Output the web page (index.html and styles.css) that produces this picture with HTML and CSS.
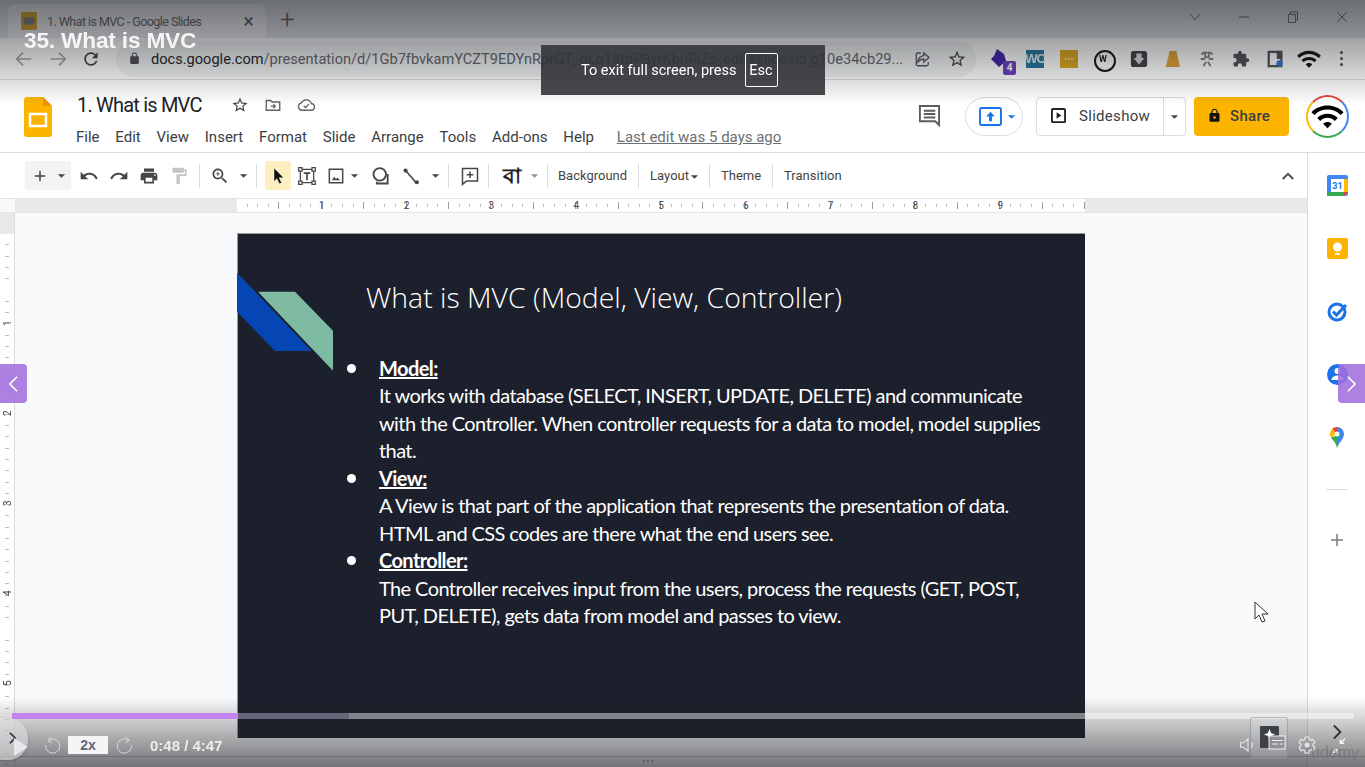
FILE: index.html
```html
<!DOCTYPE html>
<html lang="en">
<head>
    <meta charset="UTF-8">
    <title>35. What is MVC</title>
    <link rel="stylesheet" href="styles.css">
</head>
<body>

<svg class="defs" width="0" height="0">
    <symbol id="wifi" viewBox="0 0 24 24"><path d="M1 9l2 2c4.97-4.97 13.03-4.97 18 0l2-2C16.93 2.93 7.08 2.93 1 9zm8 8l3 3 3-3c-1.65-1.66-4.34-1.66-6 0zm-4-4l2 2c2.76-2.76 7.24-2.76 10 0l2-2C15.14 9.14 8.87 9.14 5 13z"/></symbol>
    <symbol id="caret" viewBox="0 0 10 6"><path d="M1 1h8L5 5z"/></symbol>
    <symbol id="star" viewBox="0 0 24 24"><path d="M22 9.24l-7.19-.62L12 2 9.19 8.63 2 9.24l5.46 4.73L5.82 21 12 17.27 18.18 21l-1.63-7.03L22 9.24zM12 15.4l-3.76 2.27 1-4.28-3.32-2.88 4.38-.38L12 6.1l1.71 4.04 4.38.38-3.32 2.88 1 4.28L12 15.4z"/></symbol>
</svg>

<div class="page">
    <!-- browser -->
    <div class="tabbar">
        <div class="tab">
            <svg class="tab-icon" viewBox="0 0 18 20"><rect width="18" height="20" rx="2" fill="#d9a521"/><rect x="3" y="6" width="12" height="8" fill="#7a7c80"/></svg>
            <span class="tab-title">1. What is MVC - Google Slides</span>
            <span class="tab-close">×</span>
        </div>
        <span class="tab-new">+</span>
        <div class="win-btns">
            <svg class="win-icon" viewBox="0 0 12 12"><path d="M1 3l5 6 5-6" fill="none" stroke="#63666a" stroke-width="1"/></svg>
            <svg class="win-icon" viewBox="0 0 12 12"><path d="M1 6h10" stroke="#63666a" stroke-width="1"/></svg>
            <svg class="win-icon" viewBox="0 0 12 12"><path d="M1.5 3.5h7v8h-7zM3.5 3.5v-2.5h7v8h-2" fill="none" stroke="#63666a" stroke-width="1"/></svg>
            <svg class="win-icon" viewBox="0 0 12 12"><path d="M1 1l10 10M11 1L1 11" stroke="#63666a" stroke-width="1"/></svg>
        </div>
    </div>

    <div class="addressbar">
        <svg class="nav-icon" viewBox="0 0 24 24"><path d="M20 12H5m6-7l-7 7 7 7" fill="none" stroke="#a3a5a8" stroke-width="1.8"/></svg>
        <svg class="nav-icon" viewBox="0 0 24 24"><path d="M4 12h15m-6-7l7 7-7 7" fill="none" stroke="#a3a5a8" stroke-width="1.8"/></svg>
        <svg class="nav-icon reload" viewBox="0 0 24 24"><path d="M17.65 6.35C16.2 4.9 14.21 4 12 4c-4.42 0-7.99 3.58-7.99 8s3.57 8 7.99 8c3.73 0 6.84-2.55 7.73-6h-2.08c-.82 2.33-3.04 4-5.65 4-3.31 0-6-2.69-6-6s2.69-6 6-6c1.66 0 3.14.69 4.22 1.78L13 11h7V4l-2.35 2.35z"/></svg>
        <div class="omnibox">
            <svg class="lock" viewBox="0 0 24 24"><path d="M18 8h-1V6c0-2.76-2.24-5-5-5S7 3.24 7 6v2H6c-1.1 0-2 .9-2 2v10c0 1.1.9 2 2 2h12c1.1 0 2-.9 2-2V10c0-1.1-.9-2-2-2zm-2.900 0H8.900V6c0-1.710 1.390-3.100 3.100-3.100 1.710 0 3.100 1.390 3.100 3.100v2z"/></svg>
            <span class="url"><b>docs.google.com</b>/presentation/d/1Gb7fbvkamYCZT9EDYnRprGT_gLq18tbP8yrKbriRiZs/edit#slide=id.g10e34cb29...</span>
            <svg class="omni-share" viewBox="0 0 24 24"><path d="M13 4l7 6-7 6v-4c-4 0-6 1.500-8 4 .5-4.500 3-8 8-8.500zM9 4H5a2 2 0 0 0-2 2v13a2 2 0 0 0 2 2h12a2 2 0 0 0 2-2v-3" fill="none" stroke="#505358" stroke-width="1.700"/></svg>
            <svg class="omni-star"><use href="#star"/></svg>
        </div>
        <div class="extensions">
            <span class="ext ext-badge">
                <svg class="ext-diamond" viewBox="0 0 20 20"><path d="M8 1l7 5 2 7-7 6-8-8 3-3z" fill="#3f1fa5"/></svg>
                <span class="badge-num">4</span>
            </span>
            <span class="ext ext-wc">WC</span>
            <span class="ext ext-dots">•••</span>
            <span class="ext ext-w">W</span>
            <span class="ext">
                <svg class="ext-svg" viewBox="0 0 20 20"><rect x="1" y="1" width="18" height="18" rx="3" fill="#3c3f42"/><path d="M7 4h6v5h3l-6 7-6-7h3z" fill="#d5d6d8"/></svg>
            </span>
            <span class="ext">
                <svg class="ext-svg" viewBox="0 0 20 20"><path d="M6 1h8l1 6 3 12H2L5 7z" fill="#e0a032"/></svg>
            </span>
            <span class="ext">
                <svg class="ext-svg" viewBox="0 0 20 20"><path d="M4 5l3-3M13 2l3 3M3 10h5M12 10h5M6 18l3-5M11 13l3 5M8 3h4v5H8z" fill="none" stroke="#7e8083" stroke-width="2"/></svg>
            </span>
            <span class="ext">
                <svg class="ext-svg" viewBox="0 0 24 24"><path fill="#4b4d50" d="M20.500 11H19V7c0-1.100-.9-2-2-2h-4V3.500C13 2.120 11.880 1 10.500 1S8 2.120 8 3.500V5H4c-1.100 0-1.990.9-1.990 2v3.800H3.500c1.490 0 2.700 1.210 2.700 2.700s-1.210 2.700-2.700 2.700H2V20c0 1.100.9 2 2 2h3.800v-1.500c0-1.490 1.210-2.700 2.700-2.700 1.490 0 2.700 1.210 2.700 2.700V22H17c1.100 0 2-.9 2-2v-4h1.500c1.380 0 2.500-1.120 2.500-2.500S21.880 11 20.500 11z"/></svg>
            </span>
            <span class="ext">
                <svg class="ext-svg" viewBox="0 0 20 20"><path d="M3 2h14v16H3z" fill="none" stroke="#4b4d50" stroke-width="2.500"/><rect x="12" y="1" width="6" height="9" fill="#4b4d50"/><circle cx="15" cy="15" r="3.500" fill="#2f6fd8"/></svg>
            </span>
            <span class="ext">
                <svg class="ext-wifi"><use href="#wifi"/></svg>
            </span>
            <span class="kebab"><i></i><i></i><i></i></span>
        </div>
    </div>

    <!-- slides header -->
    <header class="doc-header">
        <svg class="slides-logo" viewBox="0 0 28 40"><path d="M3 0h16l9 9v28a3 3 0 0 1-3 3H3a3 3 0 0 1-3-3V3a3 3 0 0 1 3-3z" fill="#fdb400"/><path d="M19 0l9 9h-9z" fill="#f09300"/><rect x="6" y="17" width="16" height="12" fill="none" stroke="#fff" stroke-width="2.500"/></svg>
        <div class="doc-info">
            <div class="doc-title-row">
                <span class="doc-title">1. What is MVC</span>
                <svg class="title-star"><use href="#star"/></svg>
                <svg class="title-icon" viewBox="0 0 24 24"><path d="M3 6h6l2 2h10v11H3zM9 13.500h6m-2.500-2.500l2.500 2.500-2.500 2.500" fill="none" stroke="#5f6368" stroke-width="1.800"/></svg>
                <svg class="title-icon" viewBox="0 0 24 24"><path d="M7 19a5 5 0 0 1-1-9.900A7 7 0 0 1 19 10a4.500 4.500 0 0 1-.5 9zM9 13l2.500 2.500L15.500 11" fill="none" stroke="#5f6368" stroke-width="1.800"/></svg>
            </div>
            <nav class="menu">
                <span>File</span><span>Edit</span><span>View</span><span>Insert</span><span>Format</span><span>Slide</span><span>Arrange</span><span>Tools</span><span>Add-ons</span><span>Help</span>
                <a class="last-edit">Last edit was 5 days ago</a>
            </nav>
        </div>
        <div class="doc-actions">
            <svg class="comment-icon" viewBox="0 0 24 24"><path d="M2 2h20v20l-4-4H2z" fill="none" stroke="#5a5d61" stroke-width="2"/><path d="M6 7h12M6 10.500h12M6 14h12" stroke="#5a5d61" stroke-width="2"/></svg>
            <div class="meet-btn">
                <svg class="meet-icon" viewBox="0 0 24 20"><rect x="1" y="1" width="22" height="18" rx="1.500" fill="none" stroke="#1a73e8" stroke-width="2"/><path d="M12 5l4.500 5H13.500v5h-3v-5H7.500z" fill="#1a73e8"/></svg>
                <svg class="caret-blue"><use href="#caret"/></svg>
            </div>
            <div class="slideshow-btn">
                <span class="slideshow-main">
                    <svg class="play-box" viewBox="0 0 16 16"><rect x="1" y="1" width="14" height="14" rx="1" fill="none" stroke="#202124" stroke-width="2"/><path d="M6 4.500l5 3.500-5 3.500z" fill="#202124"/></svg>
                    Slideshow
                </span>
                <span class="slideshow-drop"><svg class="caret"><use href="#caret"/></svg></span>
            </div>
            <div class="share-btn">
                <svg class="share-lock" viewBox="0 0 24 24"><path d="M18 8h-1V6c0-2.760-2.240-5-5-5S7 3.240 7 6v2H6c-1.100 0-2 .9-2 2v10c0 1.100.9 2 2 2h12c1.100 0 2-.9 2-2V10c0-1.100-.9-2-2-2zm-6 9c-1.100 0-2-.9-2-2s.9-2 2-2 2 .9 2 2-.9 2-2 2zm3.100-9H8.900V6c0-1.710 1.390-3.100 3.100-3.100 1.710 0 3.100 1.390 3.100 3.100v2z"/></svg>
                Share
            </div>
            <div class="avatar"><svg class="avatar-wifi"><use href="#wifi"/></svg></div>
        </div>
    </header>

    <div class="doc-body">
        <div class="editor">
            <div class="toolbar">
                <span class="tool add-group">
                    <svg class="ic-18" viewBox="0 0 24 24"><path d="M19 13h-6v6h-2v-6H5v-2h6V5h2v6h6z"/></svg>
                    <svg class="caret"><use href="#caret"/></svg>
                </span>
                <span class="tool w30"><svg class="ic-20" viewBox="0 0 24 24"><path d="M12.500 8c-2.650 0-5.050.99-6.900 2.600L2 7v9h9l-3.620-3.620c1.390-1.160 3.160-1.880 5.120-1.880 3.540 0 6.550 2.310 7.600 5.500l2.370-.78C21.080 11.030 17.150 8 12.500 8z"/></svg></span>
                <span class="tool w30"><svg class="ic-20" viewBox="0 0 24 24"><path d="M18.400 10.600C16.550 8.990 14.150 8 11.500 8c-4.650 0-8.580 3.030-9.960 7.220L3.900 16c1.050-3.190 4.050-5.500 7.600-5.500 1.950 0 3.730.72 5.120 1.880L13 16h9V7l-3.600 3.600z"/></svg></span>
                <span class="tool w30"><svg class="ic-20" viewBox="0 0 24 24"><path d="M19 8H5c-1.660 0-3 1.340-3 3v6h4v4h12v-4h4v-6c0-1.660-1.340-3-3-3zm-3 11H8v-5h8v5zm3-7c-.55 0-1-.45-1-1s.45-1 1-1 1 .45 1 1-.45 1-1 1zm-1-9H6v4h12V3z"/></svg></span>
                <span class="tool w30 muted"><svg class="ic-20" viewBox="0 0 24 24"><path d="M18 4V3c0-.55-.45-1-1-1H5c-.55 0-1 .45-1 1v4c0 .55.45 1 1 1h12c.55 0 1-.45 1-1V6h1v4H9v11c0 .55.45 1 1 1h2c.55 0 1-.45 1-1v-9h8V4h-3z"/></svg></span>
                <i class="tool-sep"></i>
                <span class="tool w30"><svg class="ic-20" viewBox="0 0 24 24"><path d="M15.500 14h-.79l-.28-.27C15.410 12.590 16 11.110 16 9.500 16 5.910 13.090 3 9.500 3S3 5.910 3 9.500 5.910 16 9.500 16c1.610 0 3.090-.59 4.230-1.570l.27.28v.79l5 4.990L20.490 19l-4.990-5zm-6 0C7.010 14 5 11.990 5 9.500S7.010 5 9.500 5 14 7.010 14 9.500 11.990 14 9.500 14zM12 10h-2v2H9v-2H7V9h2V7h1v2h2z"/></svg></span>
                <span class="tool w16"><svg class="caret"><use href="#caret"/></svg></span>
                <i class="tool-sep"></i>
                <span class="tool cursor-tool"><svg class="ic-18 dark" viewBox="0 0 24 24"><path d="M7 2l12 12h-6l3.500 7-2.500 1-3.500-7L7 19z"/></svg></span>
                <span class="tool w30 text-tool"><svg class="ic-20" viewBox="0 0 24 24"><path d="M4 4h16v16H4z" fill="none" stroke="#444746" stroke-width="1.500"/><path d="M2 2h4v4H2zM18 2h4v4h-4zM2 18h4v4H2zM18 18h4v4h-4z" fill="#fff" stroke="#444746" stroke-width="1.500"/><path d="M8 7.500h8v2h-3V17h-2V9.500H8z"/></svg></span>
                <span class="tool w26 image-tool"><svg class="ic-20" viewBox="0 0 24 24"><path d="M4 4h16v16H4z" fill="none" stroke="#444746" stroke-width="1.800"/><path d="M7 17l3-4 2 2.500 2-1.500 3 3z"/></svg></span>
                <span class="tool w12 image-caret"><svg class="caret"><use href="#caret"/></svg></span>
                <span class="tool w30 shape-tool"><svg class="ic-20" viewBox="0 0 24 24"><circle cx="10.500" cy="10" r="7.500" fill="none" stroke="#444746" stroke-width="2.200"/><path d="M20 9.500V21H7v-2" fill="none" stroke="#444746" stroke-width="2.200"/></svg></span>
                <span class="tool w32 line-tool"><svg class="ic-20" viewBox="0 0 24 24"><path d="M6 6l13 15" stroke="#444746" stroke-width="2"/><rect x="3" y="3" width="5" height="5" rx="2.500"/><rect x="16.500" y="17" width="5" height="5" rx="2.500"/></svg></span>
                <span class="tool w16"><svg class="caret"><use href="#caret"/></svg></span>
                <i class="tool-sep"></i>
                <span class="tool w26 comment-tool"><svg class="ic-20" viewBox="0 0 24 24"><path d="M3 3h18v15H8l-5 4z" fill="none" stroke="#444746" stroke-width="1.800"/><path d="M12 6.500v8M8 10.500h8" stroke="#444746" stroke-width="1.800"/></svg></span>
                <i class="tool-sep"></i>
                <span class="tool bangla">বা</span>
                <span class="tool w16 pale"><svg class="caret"><use href="#caret"/></svg></span>
                <i class="tool-sep"></i>
                <span class="tool-text bg-text">Background</span>
                <i class="tool-sep"></i>
                <span class="tool-text layout-text">Layout<svg class="caret tight"><use href="#caret"/></svg></span>
                <i class="tool-sep"></i>
                <span class="tool-text">Theme</span>
                <i class="tool-sep"></i>
                <span class="tool-text">Transition</span>
                <svg class="collapse" viewBox="0 0 24 24"><path d="M5 16l7-7 7 7" fill="none" stroke="#4b4d50" stroke-width="2.500"/></svg>
            </div>

            <div class="h-ruler">
                <div class="ruler-side"></div>
                <div class="h-scale">
                    <span>1</span><span>2</span><span>3</span><span>4</span><span>5</span><span>6</span><span>7</span><span>8</span><span>9</span>
                </div>
                <div class="ruler-side grow"></div>
            </div>

            <div class="workspace">
                <div class="v-ruler">
                    <div class="v-top"></div>
                    <div class="v-scale">
                        <span>1</span><span>2</span><span>3</span><span>4</span><span>5</span>
                    </div>
                </div>
                <div class="canvas">
                    <section class="slide">
                        <svg class="slide-deco" viewBox="0 0 96 137">
                            <path d="M0 38.700L74.700 117H38L0 77.700z" fill="#0546b4"/>
                            <path d="M21 57.700h37L96 96.700v40z" fill="#7fbaa3"/>
                        </svg>
                        <h1 class="slide-title">What is MVC (Model, View, Controller)</h1>
                        <ul class="slide-list">
                            <li><u class="term">Model:</u><br>It works with database (SELECT, INSERT, UPDATE, DELETE) and communicate<br>with the Controller. When controller requests for a data to model, model supplies<br>that.</li>
                            <li><u class="term">View:</u><br>A View is that part of the application that represents the presentation of data.<br>HTML and CSS codes are there what the end users see.</li>
                            <li><u class="term">Controller:</u><br>The Controller receives input from the users, process the requests (GET, POST,<br>PUT, DELETE), gets data from model and passes to view.</li>
                        </ul>
                    </section>
                </div>
            </div>
        </div>

        <aside class="side-panel">
            <span class="side-slot">
                <svg class="side-icon" viewBox="0 0 21 21"><rect width="21" height="21" rx="2" fill="#4285f4"/><rect x="4" y="4" width="13" height="13" fill="#fff"/><rect x="17" y="4" width="4" height="13" fill="#fbbc04"/><rect y="17" width="17" height="4" fill="#34a853"/><path d="M17 21v-4h4z" fill="#ea4335"/><text x="10.500" y="14" class="cal-num">31</text></svg>
            </span>
            <span class="side-slot">
                <svg class="side-icon" viewBox="0 0 21 21"><rect width="21" height="21" rx="2" fill="#fdb400"/><circle cx="10.500" cy="9" r="4.500" fill="#fff"/><rect x="8" y="15" width="5" height="1.800" fill="#fff"/></svg>
            </span>
            <span class="side-slot">
                <svg class="side-icon" viewBox="0 0 21 21"><circle cx="10" cy="11" r="8" fill="none" stroke="#1a73e8" stroke-width="3"/><path d="M6 10.500l3.500 3.500L19 4" fill="none" stroke="#1a73e8" stroke-width="3"/></svg>
            </span>
            <span class="side-slot">
                <svg class="side-icon" viewBox="0 0 21 21"><circle cx="10.500" cy="10.500" r="10.500" fill="#1a73e8"/><circle cx="10.500" cy="7" r="3" fill="#fff"/><path d="M4.500 16c0-3 3-4.500 6-4.500s6 1.500 6 4.500z" fill="#fff"/></svg>
            </span>
            <span class="side-slot">
                <svg class="side-map" viewBox="0 0 14 21"><path d="M7 0a7 7 0 0 1 7 7c0 5-5 8-7 14z" fill="#4285f4"/><path d="M7 0a7 7 0 0 0-5 2l5 5z" fill="#ea4335"/><path d="M2 2a7 7 0 0 0-2 5c0 1.500.5 2.500 1 3.500L7 7z" fill="#fbbc04"/><path d="M1 10.500c2 3 5 5 6 10.500V12l5-5z" fill="#34a853"/><circle cx="7" cy="7" r="2.500" fill="#fff"/></svg>
            </span>
            <i class="side-sep"></i>
            <svg class="side-plus" viewBox="0 0 14 14"><path d="M7 1v12M1 7h12" stroke="#777a7e" stroke-width="1.500"/></svg>
        </aside>
    </div>

    <!-- video player overlays -->
    <div class="shade-top"></div>
    <div class="shade-bottom"></div>
    <div class="video-title">35. What is MVC</div>
    <div class="fs-toast">To exit full screen, press<span class="esc-key">Esc</span></div>

    <div class="side-nav prev"><svg class="nav-arrow" viewBox="0 0 12 20"><path d="M10 2L2 10l8 8" fill="none" stroke="#fff" stroke-width="1.800"/></svg></div>
    <div class="side-nav next"><svg class="nav-arrow" viewBox="0 0 12 20"><path d="M2 2l8 8-8 8" fill="none" stroke="#fff" stroke-width="1.800"/></svg></div>

    <svg class="mouse" viewBox="0 0 15 23"><path d="M1 1v17l4-4 3 7 3-1-3-7h6z" fill="#fff" stroke="#333" stroke-width="1"/></svg>

    <div class="left-bump"><svg class="bump-arrow" viewBox="0 0 10 16"><path d="M2 2l6 6-6 6" fill="none" stroke="#2c2e33" stroke-width="2"/></svg></div>

    <div class="player">
        <div class="progress">
            <div class="played"></div>
            <div class="buffered"></div>
        </div>
        <div class="controls">
            <svg class="play" viewBox="0 0 14 18"><path d="M0 0l14 9L0 18z" fill="#e6e7ec"/></svg>
            <svg class="seek" viewBox="0 0 24 24"><path d="M7 6a9.500 9.500 0 1 1-3.500 6M11 1L6.500 6l5 3" fill="none" stroke="#d9dadd" stroke-width="1.300"/></svg>
            <span class="speed">2x</span>
            <svg class="seek" viewBox="0 0 24 24"><path d="M17 6a9.500 9.500 0 1 0 3.500 6M13 1l4.500 5-5 3" fill="none" stroke="#d9dadd" stroke-width="1.300"/></svg>
            <span class="time">0:48 / 4:47</span>
            <div class="controls-right">
                <svg class="volume" viewBox="0 0 24 24"><path d="M2 9h4l6-5v16l-6-5H2zM16 8a6 6 0 0 1 0 8" fill="none" stroke="#e2e3e6" stroke-width="1.500"/></svg>
                <span class="transcript-box">
                    <svg class="transcript" viewBox="0 0 28 26"><rect x="2" y="1" width="19" height="22" rx="1" fill="#3d4045"/><path d="M11.500 4l1.500 4 4 1.500-4 1.500-1.500 4-1.500-4-4-1.500 4-1.500z" fill="#fff"/><rect x="11" y="11" width="16" height="13" fill="#8f9196" stroke="#eee" stroke-width="1"/><path d="M14 19h6M22 19h3M14 15.500h11" stroke="#eee" stroke-width="1"/></svg>
                </span>
                <svg class="gear" viewBox="0 0 24 24"><path fill="none" stroke="#e2e3e6" stroke-width="1.500" d="M19.140 12.940c.04-.3.06-.61.06-.94 0-.32-.02-.64-.07-.94l2.030-1.580c.18-.14.23-.41.12-.61l-1.920-3.320c-.12-.22-.37-.29-.59-.22l-2.390.96c-.5-.38-1.030-.7-1.620-.94l-.36-2.540c-.04-.24-.24-.41-.48-.41h-3.840c-.24 0-.43.17-.47.41l-.36 2.540c-.59.24-1.130.57-1.620.94l-2.390-.96c-.22-.08-.47 0-.59.22L2.740 8.870c-.12.21-.08.47.12.61l2.030 1.580c-.05.3-.09.63-.09.94s.02.64.07.94l-2.030 1.580c-.18.14-.23.41-.12.61l1.920 3.320c.12.22.37.29.59.22l2.390-.96c.5.38 1.030.7 1.620.94l.36 2.540c.05.24.24.41.48.41h3.840c.24 0 .44-.17.47-.41l.36-2.540c.59-.24 1.130-.56 1.620-.94l2.390.96c.22.08.47 0 .59-.22l1.920-3.320c.12-.22.07-.47-.12-.61l-2.010-1.580z"/><circle cx="12" cy="12" r="3" fill="#e2e3e6"/></svg>
                <svg class="fullscreen" viewBox="0 0 16 34"><path d="M3 2l7 7-7 7" fill="none" stroke="#2c2e33" stroke-width="2"/><path d="M15 16l-5 5m0-4v4h4M1 33l5-5m0 4v-4H2" fill="none" stroke="#f4f4f6" stroke-width="1.500"/></svg>
            </div>
        </div>
        <span class="grip">•••</span>
    </div>
    <div class="udemy-mark">udemy</div>
</div>

</body>
</html>
```

FILE: styles.css
```css
* {
    box-sizing: border-box;
}

html, body {
    margin: 0;
    padding: 0;
    height: 100%;
    overflow: hidden;
}

body {
    font-family: 'Roboto', sans-serif;
    background-color: #fff;
    color: #3c4043;
}

.defs {
    position: absolute;
}

.page {
    position: relative;
    width: 1365px;
    height: 767px;
    overflow: hidden;
    display: flex;
    flex-direction: column;
    filter: blur(0.35px);
}

/* browser tabs */
.tabbar {
    height: 38px;
    background-color: #dee1e6;
    display: flex;
    align-items: flex-end;
    padding-left: 8px;
    flex-shrink: 0;
}

.tab {
    width: 258px;
    height: 34px;
    background-color: #f2f3f5;
    border-radius: 8px 8px 0 0;
    display: flex;
    align-items: center;
    padding: 0 12px 0 13px;
}

.tab-icon {
    width: 16px;
    height: 18px;
    flex-shrink: 0;
}

.tab-title {
    margin-left: 10px;
    font-size: 12.5px;
    letter-spacing: -0.55px;
    color: #5c5f63;
    white-space: nowrap;
}

.tab-close {
    margin-left: auto;
    font-size: 20px;
    color: #55585c;
}

.tab-new {
    margin-left: 14px;
    align-self: center;
    font-size: 26px;
    font-weight: 300;
    color: #55585c;
    line-height: 1;
}

.win-btns {
    margin-left: auto;
    width: 159px;
    margin-right: 17px;
    align-self: flex-start;
    margin-top: 11px;
    display: flex;
    justify-content: space-between;
}

.win-icon {
    width: 12px;
    height: 12px;
}

/* address bar */
.addressbar {
    height: 42px;
    background-color: #fff;
    border-bottom: 1px solid #dadce0;
    display: flex;
    align-items: center;
    padding-left: 13px;
    flex-shrink: 0;
}

.nav-icon {
    width: 22px;
    height: 22px;
    margin-right: 12px;
    flex-shrink: 0;
}

.reload {
    width: 20px;
    height: 20px;
    margin-right: 15px;
    fill: #404245;
}

.omnibox {
    width: 860px;
    height: 36px;
    background-color: #f1f3f4;
    border-radius: 18px;
    display: flex;
    align-items: center;
    padding-left: 12px;
    flex-shrink: 0;
}

.lock {
    width: 13px;
    height: 13px;
    fill: #4b4d50;
    flex-shrink: 0;
}

.url {
    margin-left: 10px;
    font-size: 14.6px;
    color: #5f6368;
    white-space: nowrap;
    width: 752px;
    overflow: hidden;
    flex-shrink: 0;
}

.url b {
    font-weight: 400;
    color: #202124;
}

.omni-share {
    width: 18px;
    height: 18px;
    margin-left: 11px;
    flex-shrink: 0;
}

.omni-star {
    width: 20px;
    height: 20px;
    margin-left: 15px;
    fill: #444;
    flex-shrink: 0;
}

.extensions {
    display: flex;
    align-items: center;
    margin-left: 8px;
}

.ext {
    position: relative;
    width: 34px;
    height: 24px;
    display: flex;
    align-items: center;
    justify-content: center;
    flex-shrink: 0;
}

.ext-svg {
    width: 18px;
    height: 18px;
}

.ext-diamond {
    width: 20px;
    height: 20px;
    margin-left: -4px;
    margin-top: -2px;
}

.ext-wifi {
    width: 26px;
    height: 26px;
    fill: #111;
}

.badge-num {
    position: absolute;
    right: 2px;
    bottom: -4px;
    width: 13px;
    height: 14px;
    background-color: #6a3cc0;
    color: #fff;
    font-size: 10px;
    font-weight: 700;
    text-align: center;
    line-height: 14px;
    border-radius: 2px;
}

.ext-wc {
    font-size: 13px;
    font-weight: 700;
    color: #d9eef5;
    font-family: 'Liberation Sans', sans-serif;
    letter-spacing: -1px;
    background-color: #21759b;
    background-clip: content-box;
    padding: 3px 8px;
}

.ext-dots {
    background-color: #dca51c;
    background-clip: content-box;
    padding: 3px 8px;
    color: #f6e6b4;
    font-size: 9px;
}

.ext-w {
    margin-right: 2px;
    font-size: 9px;
    font-weight: 700;
    color: #111;
}

.ext-w::after {
    content: "";
    position: absolute;
    left: 8px;
    top: 3px;
    width: 18px;
    height: 18px;
    border: 2px solid #111;
    border-radius: 50%;
}

.kebab {
    margin-left: 14px;
    display: flex;
    flex-direction: column;
    gap: 3px;
}

.kebab i {
    width: 3px;
    height: 3px;
    border-radius: 50%;
    background-color: #4b4d50;
}

/* slides header */
.doc-header {
    height: 73px;
    background-color: #fff;
    border-bottom: 1px solid #dadce0;
    display: flex;
    padding: 17px 16px 0 24px;
    flex-shrink: 0;
}

.slides-logo {
    width: 28px;
    height: 40px;
    flex-shrink: 0;
}

.doc-info {
    margin-left: 25px;
    margin-top: -3px;
}

.doc-title-row {
    display: flex;
    align-items: center;
    height: 22px;
}

.doc-title {
    font-size: 20px;
    color: #202124;
    letter-spacing: -0.8px;
    white-space: nowrap;
    width: 154px;
}

.title-star {
    width: 18px;
    height: 18px;
    fill: #444;
}

.title-icon {
    width: 18px;
    height: 18px;
    margin-left: 15px;
}

.menu {
    display: flex;
    gap: 15.8px;
    margin-top: 12px;
    margin-left: -1px;
    font-size: 15px;
    color: #3c4043;
    white-space: nowrap;
}

.last-edit {
    margin-left: 7px;
    color: #6b6e73;
    text-decoration: underline;
}

.doc-actions {
    margin-left: auto;
    display: flex;
    align-items: flex-start;
}

.comment-icon {
    width: 23px;
    height: 23px;
    margin-top: 7px;
}

.meet-btn {
    width: 58px;
    height: 39px;
    margin-left: 24px;
    border: 1px solid #dadce0;
    border-radius: 20px;
    display: flex;
    align-items: center;
    padding-left: 13px;
    gap: 5px;
}

.meet-icon {
    width: 23px;
    height: 19px;
}

.caret-blue {
    width: 9px;
    height: 6px;
    fill: #1a73e8;
}

.slideshow-btn {
    width: 150px;
    height: 39px;
    margin-left: 13px;
    border: 1px solid #dadce0;
    border-radius: 4px;
    display: flex;
    align-items: center;
}

.slideshow-main {
    width: 127px;
    height: 100%;
    display: flex;
    align-items: center;
    padding-left: 14px;
    padding-bottom: 2px;
    gap: 13px;
    font-size: 15px;
    letter-spacing: 0.3px;
    color: #3c4043;
    border-right: 1px solid #dadce0;
}

.play-box {
    width: 15px;
    height: 15px;
}

.slideshow-drop {
    flex: 1;
    display: flex;
    justify-content: center;
}

.caret {
    width: 9px;
    height: 6px;
    fill: #444;
}

.caret.tight {
    margin-left: 1px;
}

.share-btn {
    width: 95px;
    height: 39px;
    margin-left: 8px;
    background-color: #fdb400;
    border-radius: 4px;
    display: flex;
    align-items: center;
    padding-left: 13px;
    padding-bottom: 2px;
    gap: 8px;
    font-size: 15px;
    font-weight: 500;
    letter-spacing: 0.3px;
    color: #3c4043;
}

.share-lock {
    width: 15px;
    height: 15px;
    fill: #111;
}

.avatar {
    width: 43px;
    height: 43px;
    margin-left: 17px;
    margin-top: -2px;
    border-radius: 50%;
    border: 2px solid;
    border-color: #ea4335 #4285f4 #34a853 #fbbc04;
    display: flex;
    align-items: center;
    justify-content: center;
}

.avatar-wifi {
    width: 35px;
    height: 35px;
    fill: #000;
}

/* body below header */
.doc-body {
    flex: 1;
    display: flex;
    min-height: 0;
}

.editor {
    width: 1308px;
    display: flex;
    flex-direction: column;
    border-right: 1px solid #dadce0;
    flex-shrink: 0;
}

.toolbar {
    height: 45px;
    display: flex;
    align-items: center;
    padding-left: 25px;
    flex-shrink: 0;
    background-color: #fff;
}

.tool {
    height: 29px;
    display: flex;
    align-items: center;
    justify-content: center;
    flex-shrink: 0;
}

.ic-18 {
    width: 18px;
    height: 18px;
    fill: #444746;
}

.ic-20 {
    width: 20px;
    height: 20px;
    fill: #444746;
}

.dark {
    fill: #111;
}

.muted svg {
    fill: #c4c5c7;
}

.pale .caret {
    fill: #909296;
}

.add-group {
    width: 46px;
    background-color: #f1f3f4;
    border-radius: 4px;
    gap: 8px;
    margin-right: 3px;
}

.w12 { width: 12px; }
.w16 { width: 16px; }
.w26 { width: 26px; }
.w30 { width: 30px; }
.w32 { width: 32px; }

.tool-sep {
    width: 1px;
    height: 24px;
    background-color: #dadce0;
    margin: 0 5px;
    flex-shrink: 0;
}

.cursor-tool {
    width: 26px;
    margin-left: 3px;
    background-color: #feefc3;
    border-radius: 3px;
}

.text-tool { margin-left: 1px; }
.image-tool { margin-left: 1px; }
.image-caret { margin-left: -1px; }
.shape-tool { margin-left: 6px; }
.line-tool { margin-left: -1px; }
.comment-tool { margin-left: 3px; }

.bangla {
    width: 32px;
    margin-left: 2px;
    margin-right: -2px;
    padding-top: 4px;
    font-family: 'Noto Sans', 'DejaVu Sans', sans-serif;
    font-size: 21px;
    font-weight: 700;
    color: #202124;
}

.tool-text {
    font-size: 13px;
    color: #444;
    padding: 0 6px;
    white-space: nowrap;
}

.bg-text {
    margin-left: -1px;
}

.layout-text {
    margin-right: -1px;
}

.collapse {
    width: 18px;
    height: 18px;
    margin-left: auto;
    margin-right: 10px;
}

/* rulers */
.h-ruler {
    height: 15px;
    display: flex;
    flex-shrink: 0;
    border-top: 1px solid #e4e5e7;
    border-bottom: 1px solid #e4e5e7;
}

.ruler-side {
    width: 237px;
    background: linear-gradient(90deg, #f8f9fa 15px, #e8e9eb 15px);
    flex-shrink: 0;
}

.ruler-side.grow {
    flex: 1;
    background: #e8e9eb;
}

.h-scale {
    width: 848px;
    display: flex;
    background-color: #fff;
    background-image:
        repeating-linear-gradient(90deg, transparent 0, transparent 41.4px, #9a9c9f 41.4px, #9a9c9f 42.4px),
        repeating-linear-gradient(90deg, transparent 0, transparent 9.6px, #bdbec1 9.6px, #bdbec1 10.6px);
    background-size: 100% 7px, 100% 3px;
    background-position: 0 3px, 0 5px;
    background-repeat: no-repeat;
}

.h-scale span {
    width: 84.8px;
    text-align: center;
    font-size: 10px;
    line-height: 13px;
    color: #444;
    padding-left: 82px;
    white-space: nowrap;
}

.workspace {
    flex: 1;
    display: flex;
    min-height: 0;
}

.v-ruler {
    width: 15px;
    border-right: 1px solid #dadce0;
    flex-shrink: 0;
    background-color: #fff;
}

.v-top {
    height: 21px;
    background-color: #e8e9eb;
}

.v-scale {
    height: 600px;
    display: flex;
    flex-direction: column;
    padding-top: 2px;
    background-image:
        repeating-linear-gradient(180deg, transparent 0, transparent 10.3px, #bdbec1 10.3px, #bdbec1 11.3px);
    background-size: 4px 100%;
    background-position: 5px 0;
    background-repeat: no-repeat;
}

.v-scale span {
    height: 90px;
    flex-shrink: 0;
    font-size: 10px;
    color: #444;
    writing-mode: vertical-rl;
    transform: rotate(180deg);
    text-align: left;
    line-height: 15px;
}

.canvas {
    flex: 1;
    background-color: #f8f9fa;
    padding: 20px 0 0 222px;
    overflow: hidden;
}

/* the slide */
.slide {
    position: relative;
    width: 848px;
    height: 505px;
    background-color: #1c202c;
    color: #fff;
    border: 1px solid #9a9ca0;
    border-width: 1px 0 0 1px;
}

.slide-deco {
    position: absolute;
    left: -1px;
    top: 0;
    width: 96px;
    height: 137px;
}

.slide-title {
    margin: 0;
    padding: 44px 0 0 128px;
    font-family: 'Open Sans', sans-serif;
    font-weight: 300;
    font-size: 28.4px;
    line-height: 38px;
    white-space: nowrap;
}

.slide-list {
    margin: 38.5px 0 0;
    padding-left: 141px;
    list-style: none;
    font-family: 'Lato', sans-serif;
    font-size: 20px;
    line-height: 27.5px;
    letter-spacing: -0.59px;
    white-space: nowrap;
}

.slide-list li {
    position: relative;
}

.slide-list li::before {
    content: "";
    position: absolute;
    left: -32px;
    top: 9px;
    width: 9px;
    height: 9px;
    border-radius: 50%;
    background-color: #fff;
}

.term {
    font-weight: 700;
}

/* side panel */
.side-panel {
    flex: 1;
    display: flex;
    flex-direction: column;
    align-items: center;
    background-color: #fff;
    padding-top: 0.5px;
    padding-left: 1px;
}

.side-slot {
    height: 63px;
    display: flex;
    align-items: center;
}

.side-icon {
    width: 21px;
    height: 21px;
}

.side-map {
    width: 14px;
    height: 21px;
}

.cal-num {
    font-family: 'Roboto', sans-serif;
    font-size: 9px;
    font-weight: 700;
    fill: #1a73e8;
    text-anchor: middle;
}

.side-sep {
    width: 22px;
    height: 1px;
    background-color: #dadce0;
    margin-top: 20px;
}

.side-plus {
    width: 14px;
    height: 14px;
    margin-top: 43px;
}

/* player overlays */
.shade-top {
    position: absolute;
    left: 0;
    top: 0;
    width: 100%;
    height: 105px;
    background: linear-gradient(180deg, rgba(30, 32, 36, 0.6) 0, rgba(30, 32, 36, 0.42) 38px, rgba(30, 32, 36, 0) 100%);
}

.shade-bottom {
    position: absolute;
    left: 0;
    bottom: 0;
    width: 100%;
    height: 70px;
    background:
        linear-gradient(180deg, transparent 59px, rgba(70, 72, 76, 0.35) 59px, rgba(70, 72, 76, 0.35) 60px, transparent 60px),
        linear-gradient(180deg, rgba(30, 32, 36, 0) 0, rgba(30, 32, 36, 0.62) 100%);
}

.video-title {
    position: absolute;
    left: 24px;
    top: 27px;
    font-family: 'Liberation Sans', sans-serif;
    font-size: 22.7px;
    font-weight: 700;
    line-height: 26px;
    color: #f4f5f6;
    letter-spacing: -0.2px;
}

.fs-toast {
    position: absolute;
    left: 541px;
    top: 45px;
    width: 284px;
    height: 50px;
    background-color: rgba(50, 52, 56, 0.9);
    color: #fff;
    font-size: 14.5px;
    display: flex;
    align-items: center;
    gap: 8px;
    padding-left: 40px;
    white-space: pre;
}

.esc-key {
    border: 1px solid #fff;
    border-radius: 2px;
    width: 33px;
    height: 34px;
    display: flex;
    align-items: center;
    justify-content: center;
}

.side-nav {
    position: absolute;
    top: 364px;
    width: 27px;
    height: 39px;
    background-color: rgba(160, 112, 222, 0.88);
    display: flex;
    align-items: center;
    justify-content: center;
}

.side-nav.prev {
    left: 0;
    border-radius: 0 4px 4px 0;
}

.side-nav.next {
    right: 0;
    border-radius: 4px 0 0 4px;
}

.nav-arrow {
    width: 11px;
    height: 18px;
}

.mouse {
    position: absolute;
    left: 1254px;
    top: 601px;
    width: 15px;
    height: 23px;
}

.player {
    position: absolute;
    left: 0;
    right: 0;
    top: 713px;
    height: 54px;
}

.progress {
    margin-left: 12px;
    margin-right: 11px;
    height: 6px;
    background-color: rgba(255, 255, 255, 0.45);
    display: flex;
}

.played {
    width: 226px;
    background-color: #c583f2;
}

.buffered {
    width: 111px;
    background-color: #636779;
}

.controls {
    display: flex;
    align-items: center;
    height: 26px;
    margin-top: 13px;
    padding-left: 14px;
}

.play {
    width: 14px;
    height: 18px;
    margin-top: 4px;
    flex-shrink: 0;
}

.seek {
    width: 18px;
    height: 18px;
    margin-left: 15px;
    flex-shrink: 0;
}

.speed {
    margin-left: 7px;
    width: 40px;
    height: 18px;
    background-color: #f5f5f7;
    color: #62657a;
    font-family: 'Liberation Sans', sans-serif;
    font-size: 14px;
    font-weight: 700;
    line-height: 18px;
    text-align: center;
}

.speed + .seek {
    margin-left: 8px;
}

.time {
    margin-left: 16px;
    font-family: 'Liberation Sans', sans-serif;
    font-size: 15px;
    font-weight: 700;
    color: #eceded;
    white-space: nowrap;
}

.controls-right {
    margin-left: auto;
    display: flex;
    align-items: center;
    padding-right: 19px;
}

.volume {
    width: 18px;
    height: 18px;
    margin-right: -7px;
}

.transcript-box {
    position: relative;
    width: 38px;
    height: 42px;
    margin-top: -14px;
    background-color: rgba(255, 255, 255, 0.12);
    border: 1px solid rgba(120, 122, 126, 0.45);
    border-radius: 3px;
    display: flex;
    align-items: center;
    justify-content: center;
}

.transcript {
    width: 28px;
    height: 26px;
    margin-left: 6px;
}

.gear {
    width: 20px;
    height: 20px;
    margin-left: 9px;
}

.fullscreen {
    width: 15px;
    height: 33px;
    margin-left: 14px;
    margin-top: -12px;
}

.grip {
    position: absolute;
    left: 642px;
    bottom: 0;
    font-size: 10px;
    letter-spacing: 1px;
    color: #5d5f63;
    line-height: 10px;
}

.left-bump {
    position: absolute;
    left: -24px;
    top: 718px;
    width: 52px;
    height: 42px;
    border-radius: 20px;
    background-color: rgba(225, 225, 228, 0.55);
    box-shadow: 0 1px 3px rgba(0, 0, 0, 0.2);
    padding: 13px 0 0 32px;
}

.bump-arrow {
    display: block;
    width: 9px;
    height: 14px;
}

.udemy-mark {
    position: absolute;
    left: 1311px;
    top: 744px;
    font-family: 'Liberation Sans', sans-serif;
    font-size: 16px;
    color: rgba(110, 112, 116, 0.7);
}
```
